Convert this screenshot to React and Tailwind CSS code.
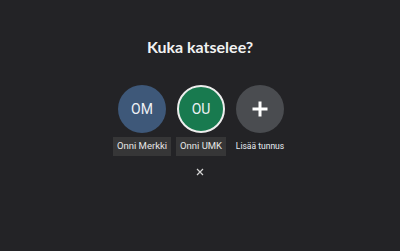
export default function App() {
  const profiles = [
    { initials: "OM", name: "Onni Merkki", bg: "bg-[#3e5879]", border: "" },
    { initials: "OU", name: "Onni UMK", bg: "bg-[#187a4f]", border: "border-2 border-[#eeeeee]" },
  ];
  return (
    <div className="w-[400px] h-[251px] bg-[#232326] flex flex-col items-center overflow-hidden">
      <h1
        className="mt-[37px] text-[16px] leading-[20px] font-bold text-[#f2f2f2]"
        style={{ fontFamily: "Lato, 'Liberation Sans', sans-serif" }}
      >
        Kuka katselee?
      </h1>
      <div className="mt-[28px] ml-[2px] grid grid-cols-[59px_59px_59px]">
        {profiles.map((p) => (
          <div key={p.name} className="flex flex-col items-center">
            <div
              className={`w-[48px] h-[48px] rounded-full ${p.bg} ${p.border} flex items-center justify-center text-[14px] text-[#eef1f5]`}
              style={{ fontFamily: "Roboto, 'Liberation Sans', sans-serif" }}
            >
              {p.initials}
            </div>
            <div
              className="mt-[4px] h-[19px] px-[4px] bg-[#363637] flex items-center whitespace-nowrap text-[9.5px] text-[#e6e6e6]"
              style={{ fontFamily: "Roboto, 'Liberation Sans', sans-serif" }}
            >
              {p.name}
            </div>
          </div>
        ))}
        <div className="flex flex-col items-center">
          <div className="w-[48px] h-[48px] rounded-full bg-[#4a4c50] flex items-center justify-center">
            <svg width="18" height="18" viewBox="0 0 18 18">
              <path d="M9 1.5V16.5M1.5 9H16.5" stroke="#ffffff" strokeWidth="3" />
            </svg>
          </div>
          <div
            className="mt-[4px] h-[19px] flex items-center whitespace-nowrap text-[8.5px] text-[#e8ecf2]"
            style={{ fontFamily: "Roboto, 'Liberation Sans', sans-serif" }}
          >
            Lisää tunnus
          </div>
        </div>
      </div>
      <svg className="mt-[12px]" width="8" height="8" viewBox="0 0 8 8">
        <path d="M1 1L7 7M7 1L1 7" stroke="#d4d4d4" strokeWidth="1.2" />
      </svg>
    </div>
  );
}
